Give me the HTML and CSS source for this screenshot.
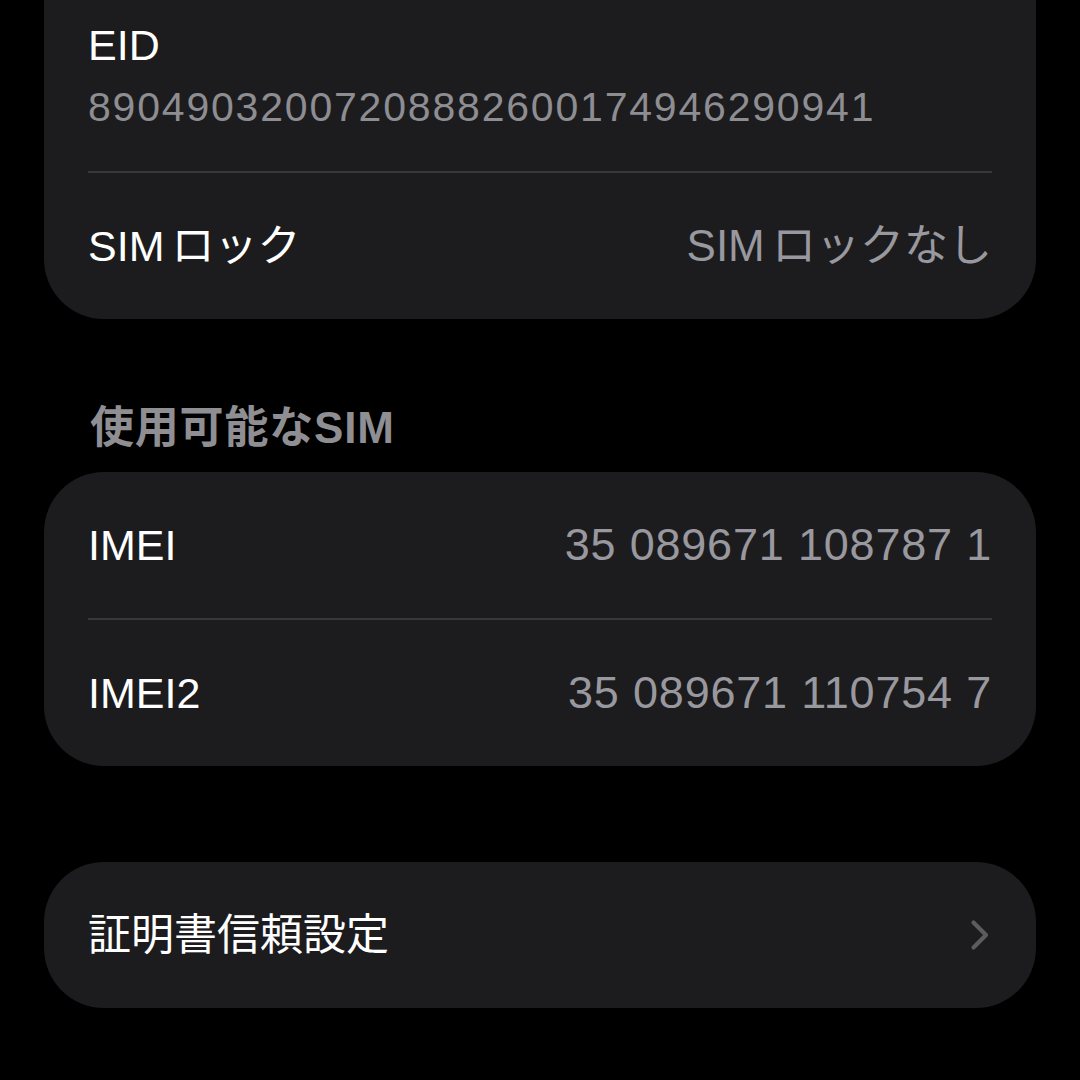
FILE: index.html
```html
<!DOCTYPE html>
<html lang="ja">
<head>
  <meta charset="UTF-8" />
  <meta name="viewport" content="width=device-width, initial-scale=1.0"/>
  <title>情報</title>
  <link rel="stylesheet" href="styles.css">
</head>
<body>
  <main class="screen">
    <!-- card scrolled partly above the top edge -->
    <section class="group group-first">
      <div class="row row-sub">
        <span class="label">EID</span>
        <span class="sub">89049032007208882600174946290941</span>
      </div>
      <div class="row">
        <span class="label tight">SIM ロック</span>
        <span class="value tight">SIM ロックなし</span>
      </div>
    </section>

    <h2 class="section-title">使用可能なSIM</h2>

    <section class="group">
      <div class="row">
        <span class="label">IMEI</span>
        <span class="value num">35 089671 108787 1</span>
      </div>
      <div class="row">
        <span class="label">IMEI2</span>
        <span class="value num">35 089671 110754 7</span>
      </div>
    </section>

    <section class="group group-link">
      <div class="row">
        <span class="label">証明書信頼設定</span>
        <svg class="chevron" width="20" height="32" viewBox="0 0 20 32">
          <path d="M3.5 3.5 L16 16 L3.5 28.5" fill="none" stroke="#5c5c60" stroke-width="4.2" stroke-linecap="round" stroke-linejoin="round"/>
        </svg>
      </div>
    </section>
  </main>
</body>
</html>
```

FILE: styles.css
```css
body {
  margin: 0;
  padding: 0;
  background-color: #000;
  color: #fff;
  font-family: "Liberation Sans", "Noto Sans CJK JP", sans-serif;
  overflow: hidden;
}
.screen {
  display: flex;
  flex-direction: column;
}
.group {
  background-color: #1c1c1e;
  border-radius: 60px;
  margin: 0 44px;
  padding: 0 44px;
}
.group-first {
  margin-top: -60px;
}
.group-link {
  margin-top: 96px;
}
.row {
  display: flex;
  justify-content: space-between;
  align-items: center;
  height: 146px;
  box-sizing: border-box;
}
.row + .row {
  border-top: 2px solid #38383a;
  height: 148px;
}
.row-sub {
  flex-direction: column;
  align-items: flex-start;
  justify-content: flex-start;
  height: auto;
  padding: 79px 0 40px;
}
.label {
  font-size: 43px;
  line-height: 52px;
}
.value {
  font-size: 44px;
  line-height: 52px;
  color: #98989e;
}
.num {
  font-size: 45px;
  letter-spacing: 0.8px;
}
.tight {
  word-spacing: -5px;
}
.sub {
  font-size: 41px;
  line-height: 48px;
  letter-spacing: 1.8px;
  color: #8d8d92;
  margin-top: 12px;
}
.section-title {
  margin: 83px 0 18px;
  padding: 0 90px;
  font-size: 44px;
  line-height: 52px;
  font-weight: bold;
  letter-spacing: 0.8px;
  color: #8e8e93;
}
.chevron {
  display: block;
  margin-right: 2px;
}
```
